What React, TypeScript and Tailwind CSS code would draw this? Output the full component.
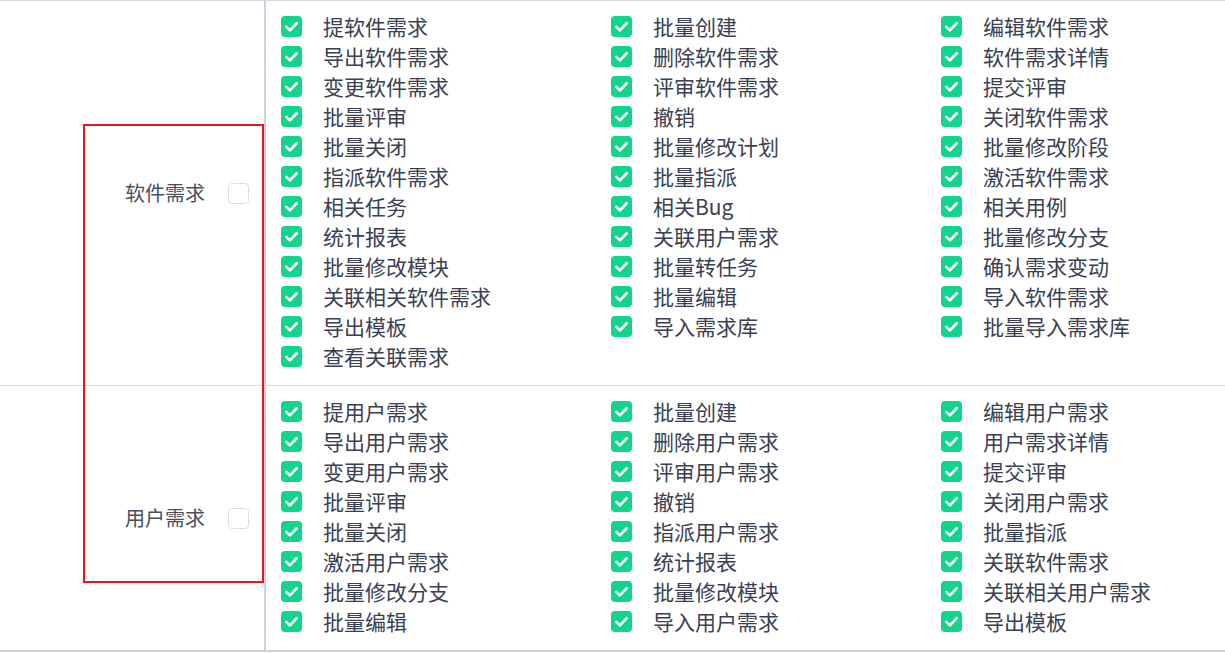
const softwareReq = [
  "提软件需求", "批量创建", "编辑软件需求",
  "导出软件需求", "删除软件需求", "软件需求详情",
  "变更软件需求", "评审软件需求", "提交评审",
  "批量评审", "撤销", "关闭软件需求",
  "批量关闭", "批量修改计划", "批量修改阶段",
  "指派软件需求", "批量指派", "激活软件需求",
  "相关任务", "相关Bug", "相关用例",
  "统计报表", "关联用户需求", "批量修改分支",
  "批量修改模块", "批量转任务", "确认需求变动",
  "关联相关软件需求", "批量编辑", "导入软件需求",
  "导出模板", "导入需求库", "批量导入需求库",
  "查看关联需求",
];

const userReq = [
  "提用户需求", "批量创建", "编辑用户需求",
  "导出用户需求", "删除用户需求", "用户需求详情",
  "变更用户需求", "评审用户需求", "提交评审",
  "批量评审", "撤销", "关闭用户需求",
  "批量关闭", "指派用户需求", "批量指派",
  "激活用户需求", "统计报表", "关联软件需求",
  "批量修改分支", "批量修改模块", "关联相关用户需求",
  "批量编辑", "导入用户需求", "导出模板",
];

const groups = [
  { label: "软件需求", items: softwareReq },
  { label: "用户需求", items: userReq },
];

function CheckedBox() {
  return (
    <span className="flex h-[21px] w-[21px] shrink-0 items-center justify-center rounded-[4px] bg-[#12d48a]">
      <svg width="21" height="21" viewBox="0 0 21 21" fill="none" aria-hidden>
        <path d="M5.3 10.9l3.6 3.5 6.8-7.2" stroke="white" strokeWidth="2.7" strokeLinecap="round" strokeLinejoin="round" />
      </svg>
    </span>
  );
}

function PermGroup({ label, items }: { label: string; items: string[] }) {
  return (
    <div className="flex border-b border-[#d5d8e0] last:border-b-2 last:border-[#cdd0da]">
      <div className="flex w-[264px] shrink-0 items-center justify-end gap-[23px] pr-[15px]">
        <span className="text-[20px] leading-none text-[#4a4f5e]">{label}</span>
        <span className="h-[21px] w-[21px] rounded-[4px] border border-[#dcdfe6] bg-white" />
      </div>
      <div className="grid flex-1 grid-cols-[330px_330px_330px] border-l-2 border-[#d0d3dd] pt-[10px] pb-[14px] pl-[15px]">
        {items.map((name, i) => (
          <div key={i} className="flex h-[30px] items-center gap-[21px]">
            <CheckedBox />
            <span className="text-[21px] leading-none text-[#3a4051]">{name}</span>
          </div>
        ))}
      </div>
    </div>
  );
}

export default function App() {
  return (
    <div
      className="relative h-[653px] w-[1225px] overflow-hidden bg-white"
      style={{ fontFamily: '"Noto Sans CJK SC", "Noto Sans", sans-serif' }}
    >
      <div className="border-t border-[#d5d8e0]">
        {groups.map((g) => (
          <PermGroup key={g.label} label={g.label} items={g.items} />
        ))}
      </div>
      {/* annotation box */}
      <div className="pointer-events-none absolute left-[83px] top-[124px] h-[459px] w-[181px] border-2 border-[#e8141e]" />
    </div>
  );
}
